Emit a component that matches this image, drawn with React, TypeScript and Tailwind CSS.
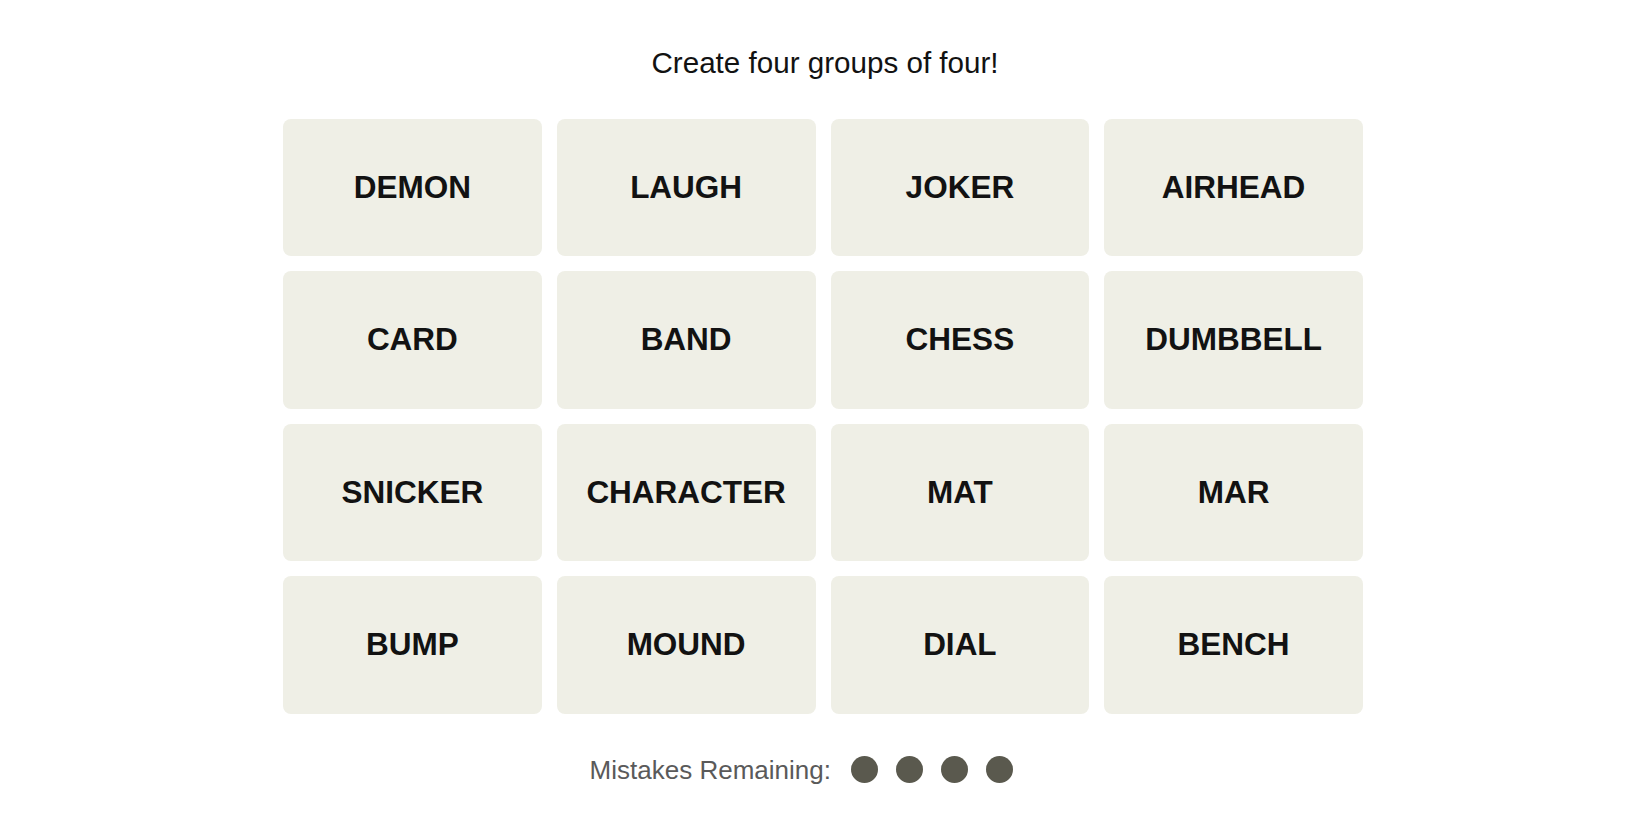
import React from "react";

const WORDS = [
  "DEMON", "LAUGH", "JOKER", "AIRHEAD",
  "CARD", "BAND", "CHESS", "DUMBBELL",
  "SNICKER", "CHARACTER", "MAT", "MAR",
  "BUMP", "MOUND", "DIAL", "BENCH",
];

export default function App() {
  return (
    <div className="w-full min-h-screen bg-white flex flex-col items-center font-['Liberation_Sans',Arial,sans-serif]">
      <h1 className="mt-[48px] text-[29.6px] leading-[30px] font-normal text-[#121212]">
        Create four groups of four!
      </h1>
      <div className="mt-[40.5px] mr-[4px] w-[1080px] grid grid-cols-4 gap-[15px]">
        {WORDS.map((w) => (
          <button
            key={w}
            className="h-[137.5px] rounded-[8px] bg-[#efefe6] flex items-center justify-center text-[31.5px] font-bold text-[#121212] uppercase"
          >
            {w}
          </button>
        ))}
      </div>
      <div className="mt-[42px] h-[28px] flex items-center justify-center">
        <span className="text-[26px] leading-[28px] text-[#5a5a5a]">Mistakes Remaining:</span>
        <div className="ml-[20px] flex items-center gap-[17.5px]">
          {[0, 1, 2, 3].map((i) => (
            <span key={i} className="block w-[27.5px] h-[27.5px] rounded-full bg-[#5a594e]" />
          ))}
        </div>
        <span className="block w-[47px]" />
      </div>
    </div>
  );
}
